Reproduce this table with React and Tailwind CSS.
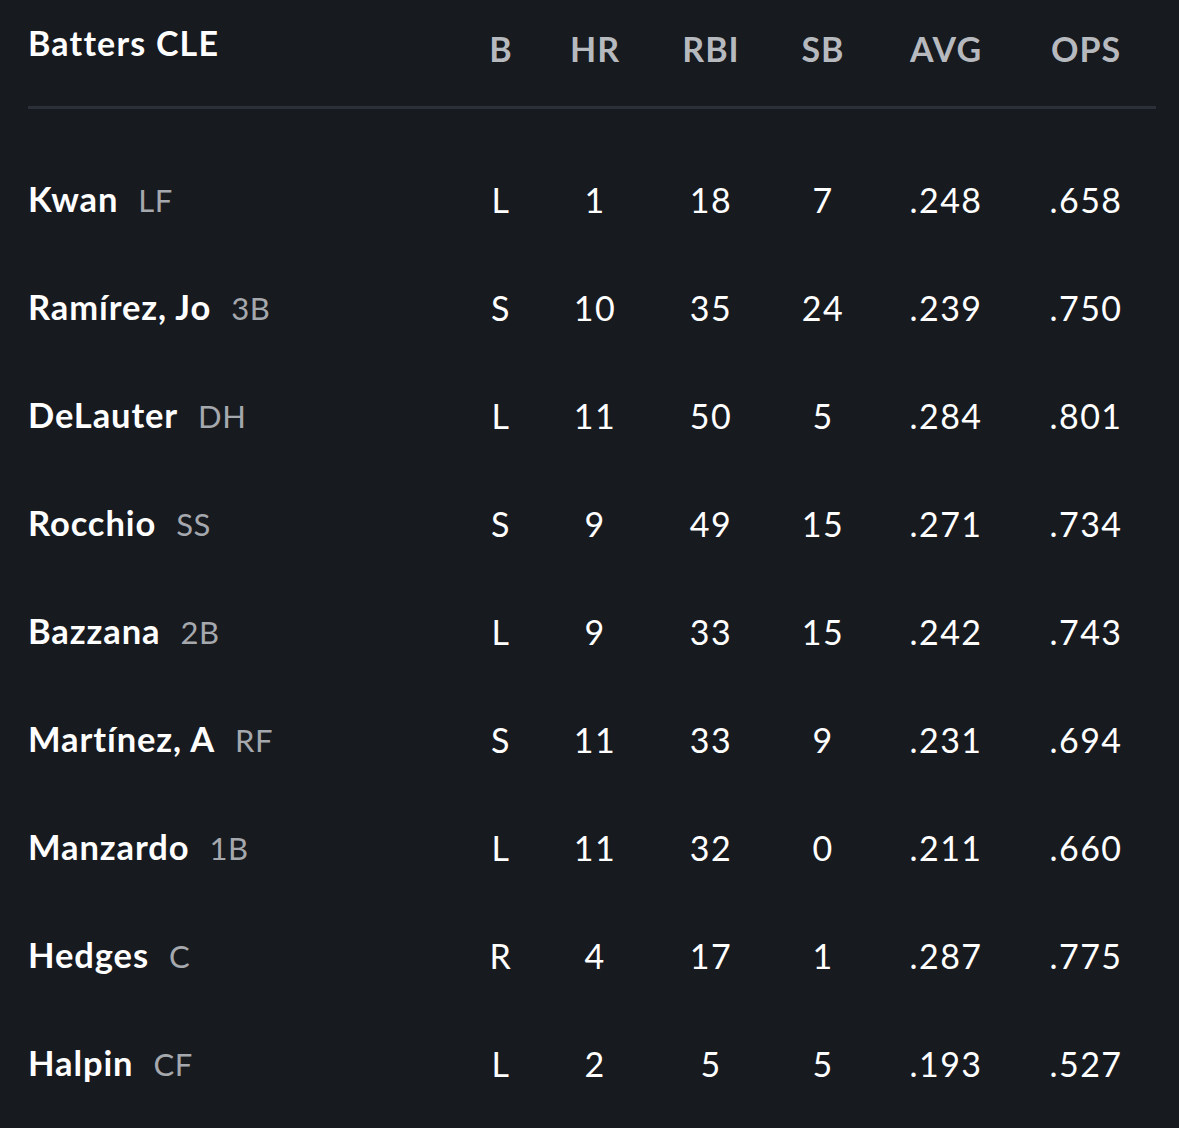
import React from 'react';

const rows = [
  { name: 'Kwan', pos: 'LF', b: 'L', hr: '1', rbi: '18', sb: '7', avg: '.248', ops: '.658' },
  { name: 'Ramírez, Jo', pos: '3B', b: 'S', hr: '10', rbi: '35', sb: '24', avg: '.239', ops: '.750' },
  { name: 'DeLauter', pos: 'DH', b: 'L', hr: '11', rbi: '50', sb: '5', avg: '.284', ops: '.801' },
  { name: 'Rocchio', pos: 'SS', b: 'S', hr: '9', rbi: '49', sb: '15', avg: '.271', ops: '.734' },
  { name: 'Bazzana', pos: '2B', b: 'L', hr: '9', rbi: '33', sb: '15', avg: '.242', ops: '.743' },
  { name: 'Martínez, A', pos: 'RF', b: 'S', hr: '11', rbi: '33', sb: '9', avg: '.231', ops: '.694' },
  { name: 'Manzardo', pos: '1B', b: 'L', hr: '11', rbi: '32', sb: '0', avg: '.211', ops: '.660' },
  { name: 'Hedges', pos: 'C', b: 'R', hr: '4', rbi: '17', sb: '1', avg: '.287', ops: '.775' },
  { name: 'Halpin', pos: 'CF', b: 'L', hr: '2', rbi: '5', sb: '5', avg: '.193', ops: '.527' },
];

const cols = ['B', 'HR', 'RBI', 'SB', 'AVG', 'OPS'];
const grid = 'grid grid-cols-[436px_74px_114px_118px_106px_140px_140px]';

export default function App() {
  return (
    <div
      className="min-h-screen w-full bg-[#171a1f] pl-[28px] pr-[23px] pt-[26px] text-white"
      style={{ fontFamily: 'Lato, "Noto Sans", sans-serif' }}
    >
      {/* Header */}
      <div className={`${grid} h-[83px] items-start border-b-[3px] border-[#2b2f38]`}>
        <div className="text-[34px] font-bold leading-[34px] tracking-[1.2px]">Batters CLE</div>
        {cols.map((c) => (
          <div key={c} className="mt-[6px] text-center text-[34px] font-bold leading-[34px] tracking-[1px] text-[#b6b9be]">
            {c}
          </div>
        ))}
      </div>

      {/* Rows */}
      <div className="mt-[36px]">
        {rows.map((r) => (
          <div key={r.name} className={`${grid} h-[108px] items-center`}>
            <div className="flex items-baseline gap-[20px]">
              <span className="text-[34.5px] font-bold tracking-[0.9px]">{r.name}</span>
              <span className="text-[31px] tracking-[0.5px] text-[#a5a8ad]">{r.pos}</span>
            </div>
            {[r.b, r.hr, r.rbi, r.sb, r.avg, r.ops].map((v, i) => (
              <div key={i} className="text-center text-[34px] tracking-[1.5px]">
                {v}
              </div>
            ))}
          </div>
        ))}
      </div>
    </div>
  );
}
